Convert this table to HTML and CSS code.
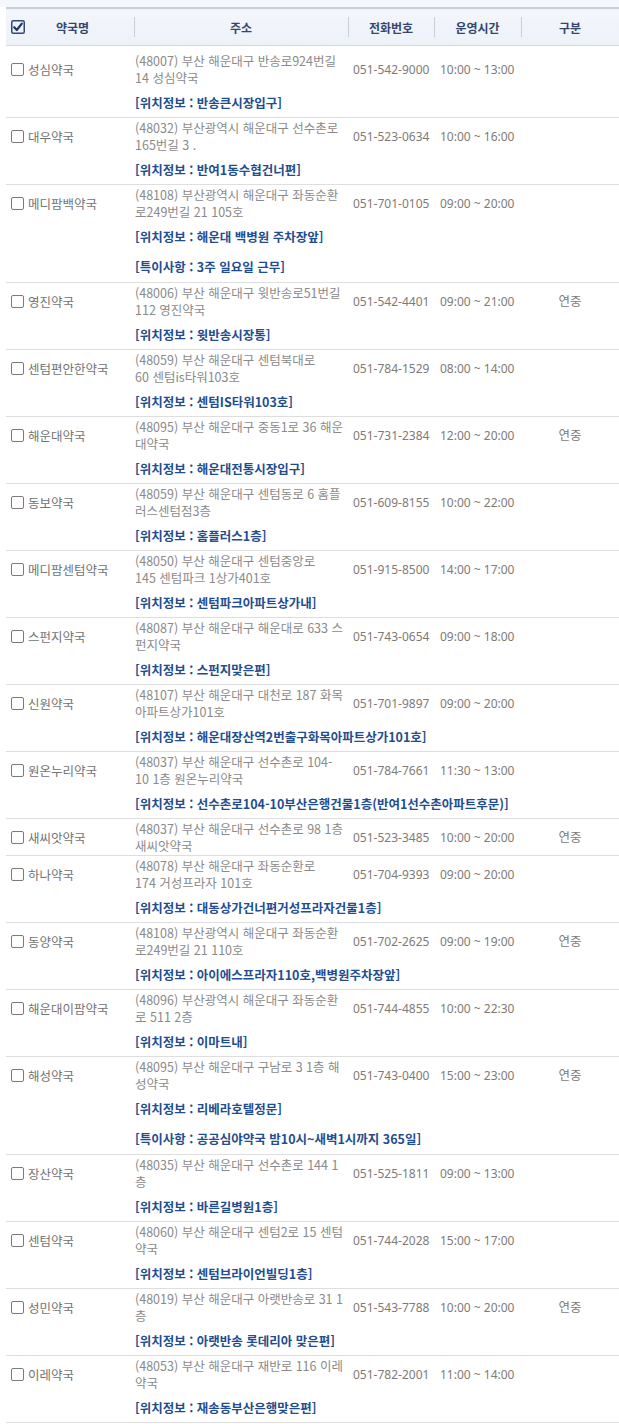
FILE: index.html
```html
<!DOCTYPE html>
<html lang="ko">
<head>
<meta charset="utf-8">
<title>약국 목록</title>
<link rel="stylesheet" href="styles.css">
</head>
<body>
<div class="wrap">
<table class="list">
  <colgroup>
    <col class="c-name"><col class="c-addr"><col class="c-tel"><col class="c-time"><col class="c-type">
  </colgroup>
  <thead>
    <tr>
      <th class="th-name"><div class="th-name-in"><svg class="cb-all" width="14" height="14" viewBox="0 0 14 14"><rect x="0.75" y="0.75" width="12.5" height="12.5" rx="1.5" fill="#eef3fb" stroke="#2d4a7a" stroke-width="1.5"/><path d="M3.2 7.2 L5.8 10 L10.8 3.6" fill="none" stroke="#1f3563" stroke-width="2.2" stroke-linecap="round" stroke-linejoin="round"/></svg><span class="th-label">약국명</span></div></th>
      <th><span class="th-sep">주소</span></th>
      <th><span class="th-sep">전화번호</span></th>
      <th><span class="th-sep">운영시간</span></th>
      <th><span class="th-sep">구분</span></th>
    </tr>
  </thead>
  <tbody>
    <tr class="spacer"><td colspan="5"></td></tr>

    <tr class="main"><td class="name"><div class="name-in"><span class="cb"></span><span>성심약국</span></div></td><td class="addr">(48007) 부산 해운대구 반송로924번길<br>14 성심약국</td><td class="tel">051-542-9000</td><td class="time">10:00 ~ 13:00</td><td class="type"></td></tr>
    <tr class="info last"><td></td><td colspan="4">[위치정보 : 반송큰시장입구]</td></tr>

    <tr class="main"><td class="name"><div class="name-in"><span class="cb"></span><span>대우약국</span></div></td><td class="addr">(48032) 부산광역시 해운대구 선수촌로<br>165번길 3 .</td><td class="tel">051-523-0634</td><td class="time">10:00 ~ 16:00</td><td class="type"></td></tr>
    <tr class="info last"><td></td><td colspan="4">[위치정보 : 반여1동수협건너편]</td></tr>

    <tr class="main"><td class="name"><div class="name-in"><span class="cb"></span><span>메디팜백약국</span></div></td><td class="addr">(48108) 부산광역시 해운대구 좌동순환<br>로249번길 21 105호</td><td class="tel">051-701-0105</td><td class="time">09:00 ~ 20:00</td><td class="type"></td></tr>
    <tr class="info"><td></td><td colspan="4">[위치정보 : 해운대 백병원 주차장앞]</td></tr>
    <tr class="info note last"><td></td><td colspan="4">[특이사항 : 3주 일요일 근무]</td></tr>

    <tr class="main"><td class="name"><div class="name-in"><span class="cb"></span><span>영진약국</span></div></td><td class="addr">(48006) 부산 해운대구 윗반송로51번길<br>112 영진약국</td><td class="tel">051-542-4401</td><td class="time">09:00 ~ 21:00</td><td class="type">연중</td></tr>
    <tr class="info last"><td></td><td colspan="4">[위치정보 : 윗반송시장통]</td></tr>

    <tr class="main"><td class="name"><div class="name-in"><span class="cb"></span><span>센텀편안한약국</span></div></td><td class="addr">(48059) 부산 해운대구 센텀북대로<br>60 센텀is타워103호</td><td class="tel">051-784-1529</td><td class="time">08:00 ~ 14:00</td><td class="type"></td></tr>
    <tr class="info last"><td></td><td colspan="4">[위치정보 : 센텀IS타워103호]</td></tr>

    <tr class="main"><td class="name"><div class="name-in"><span class="cb"></span><span>해운대약국</span></div></td><td class="addr">(48095) 부산 해운대구 중동1로 36 해운<br>대약국</td><td class="tel">051-731-2384</td><td class="time">12:00 ~ 20:00</td><td class="type">연중</td></tr>
    <tr class="info last"><td></td><td colspan="4">[위치정보 : 해운대전통시장입구]</td></tr>

    <tr class="main"><td class="name"><div class="name-in"><span class="cb"></span><span>동보약국</span></div></td><td class="addr">(48059) 부산 해운대구 센텀동로 6 홈플<br>러스센텀점3층</td><td class="tel">051-609-8155</td><td class="time">10:00 ~ 22:00</td><td class="type"></td></tr>
    <tr class="info last"><td></td><td colspan="4">[위치정보 : 홈플러스1층]</td></tr>

    <tr class="main"><td class="name"><div class="name-in"><span class="cb"></span><span>메디팜센텀약국</span></div></td><td class="addr">(48050) 부산 해운대구 센텀중앙로<br>145 센텀파크 1상가401호</td><td class="tel">051-915-8500</td><td class="time">14:00 ~ 17:00</td><td class="type"></td></tr>
    <tr class="info last"><td></td><td colspan="4">[위치정보 : 센텀파크아파트상가내]</td></tr>

    <tr class="main"><td class="name"><div class="name-in"><span class="cb"></span><span>스펀지약국</span></div></td><td class="addr">(48087) 부산 해운대구 해운대로 633 스<br>펀지약국</td><td class="tel">051-743-0654</td><td class="time">09:00 ~ 18:00</td><td class="type"></td></tr>
    <tr class="info last"><td></td><td colspan="4">[위치정보 : 스펀지맞은편]</td></tr>

    <tr class="main"><td class="name"><div class="name-in"><span class="cb"></span><span>신원약국</span></div></td><td class="addr">(48107) 부산 해운대구 대천로 187 화목<br>아파트상가101호</td><td class="tel">051-701-9897</td><td class="time">09:00 ~ 20:00</td><td class="type"></td></tr>
    <tr class="info last"><td></td><td colspan="4">[위치정보 : 해운대장산역2번출구화목아파트상가101호]</td></tr>

    <tr class="main"><td class="name"><div class="name-in"><span class="cb"></span><span>원온누리약국</span></div></td><td class="addr">(48037) 부산 해운대구 선수촌로 104-<br>10 1층 원온누리약국</td><td class="tel">051-784-7661</td><td class="time">11:30 ~ 13:00</td><td class="type"></td></tr>
    <tr class="info last"><td></td><td colspan="4">[위치정보 : 선수촌로104-10부산은행건물1층(반여1선수촌아파트후문)]</td></tr>

    <tr class="main last"><td class="name"><div class="name-in"><span class="cb"></span><span>새씨앗약국</span></div></td><td class="addr">(48037) 부산 해운대구 선수촌로 98 1층<br>새씨앗약국</td><td class="tel">051-523-3485</td><td class="time">10:00 ~ 20:00</td><td class="type">연중</td></tr>

    <tr class="main"><td class="name"><div class="name-in"><span class="cb"></span><span>하나약국</span></div></td><td class="addr">(48078) 부산 해운대구 좌동순환로<br>174 거성프라자 101호</td><td class="tel">051-704-9393</td><td class="time">09:00 ~ 20:00</td><td class="type"></td></tr>
    <tr class="info last"><td></td><td colspan="4">[위치정보 : 대동상가건너편거성프라자건물1층]</td></tr>

    <tr class="main"><td class="name"><div class="name-in"><span class="cb"></span><span>동양약국</span></div></td><td class="addr">(48108) 부산광역시 해운대구 좌동순환<br>로249번길 21 110호</td><td class="tel">051-702-2625</td><td class="time">09:00 ~ 19:00</td><td class="type">연중</td></tr>
    <tr class="info last"><td></td><td colspan="4">[위치정보 : 아이에스프라자110호,백병원주차장앞]</td></tr>

    <tr class="main"><td class="name"><div class="name-in"><span class="cb"></span><span>해운대이팜약국</span></div></td><td class="addr">(48096) 부산광역시 해운대구 좌동순환<br>로 511 2층</td><td class="tel">051-744-4855</td><td class="time">10:00 ~ 22:30</td><td class="type"></td></tr>
    <tr class="info last"><td></td><td colspan="4">[위치정보 : 이마트내]</td></tr>

    <tr class="main"><td class="name"><div class="name-in"><span class="cb"></span><span>해성약국</span></div></td><td class="addr">(48095) 부산 해운대구 구남로 3 1층 해<br>성약국</td><td class="tel">051-743-0400</td><td class="time">15:00 ~ 23:00</td><td class="type">연중</td></tr>
    <tr class="info"><td></td><td colspan="4">[위치정보 : 리베라호텔정문]</td></tr>
    <tr class="info note last"><td></td><td colspan="4">[특이사항 : 공공심야약국 밤10시~새벽1시까지 365일]</td></tr>

    <tr class="main"><td class="name"><div class="name-in"><span class="cb"></span><span>장산약국</span></div></td><td class="addr">(48035) 부산 해운대구 선수촌로 144 1<br>층</td><td class="tel">051-525-1811</td><td class="time">09:00 ~ 13:00</td><td class="type"></td></tr>
    <tr class="info last"><td></td><td colspan="4">[위치정보 : 바른길병원1층]</td></tr>

    <tr class="main"><td class="name"><div class="name-in"><span class="cb"></span><span>센텀약국</span></div></td><td class="addr">(48060) 부산 해운대구 센텀2로 15 센텀<br>약국</td><td class="tel">051-744-2028</td><td class="time">15:00 ~ 17:00</td><td class="type"></td></tr>
    <tr class="info last"><td></td><td colspan="4">[위치정보 : 센텀브라이언빌딩1층]</td></tr>

    <tr class="main"><td class="name"><div class="name-in"><span class="cb"></span><span>성민약국</span></div></td><td class="addr">(48019) 부산 해운대구 아랫반송로 31 1<br>층</td><td class="tel">051-543-7788</td><td class="time">10:00 ~ 20:00</td><td class="type">연중</td></tr>
    <tr class="info last"><td></td><td colspan="4">[위치정보 : 아랫반송 롯데리아 맞은편]</td></tr>

    <tr class="main"><td class="name"><div class="name-in"><span class="cb"></span><span>이레약국</span></div></td><td class="addr">(48053) 부산 해운대구 재반로 116 이레<br>약국</td><td class="tel">051-782-2001</td><td class="time">11:00 ~ 14:00</td><td class="type"></td></tr>
    <tr class="info last"><td></td><td colspan="4">[위치정보 : 재송동부산은행맞은편]</td></tr>
  </tbody>
</table>
</div>
</body>
</html>
```

FILE: styles.css
```css
html, body {
  margin: 0;
  padding: 0;
  background: #fff;
}
body {
  font-family: "Noto Sans CJK KR", "Noto Sans", sans-serif;
  font-size: 12.5px;
  color: #777;
  overflow: hidden;
}
.wrap {
  padding: 7px 0 0 6px;
  background: linear-gradient(#f4f7fb 0, #f4f7fb 7px, #fff 7px);
}
.list {
  width: 613px;
  border-collapse: collapse;
  table-layout: fixed;
}
.c-name { width: 128px; }
.c-addr { width: 214px; }
.c-tel { width: 86px; }
.c-time { width: 87px; }
.c-type { width: 98px; }

.list thead tr {
  border-top: 2px solid #c8d0db;
  border-bottom: 1px solid #d3d9e2;
  background: linear-gradient(#f3f6fb, #edf2f9);
}
.list th {
  height: 36px;
  padding: 0;
  font-weight: bold;
  font-size: 12px;
  color: #34466d;
  text-align: center;
  vertical-align: middle;
}
.th-name-in {
  display: flex;
  align-items: center;
  padding: 0 14px 0 5px;
}
.cb-all { display: block; flex: none; }
.th-label { flex: 1; text-align: center; }
.list th + th {
  background: linear-gradient(#c9ced6, #c9ced6) left center / 1px 20px no-repeat;
}

.spacer td { height: 5px; padding: 0; }

.main td {
  height: 36px;
  padding: 1px 0;
  box-sizing: border-box;
  vertical-align: middle;
  line-height: 17px;
}
.info td {
  height: 30px;
  padding: 0;
  line-height: 17px;
  vertical-align: middle;
  font-weight: bold;
  color: #1f4d8f;
  white-space: nowrap;
  padding-left: 1px;
}
.info.note td { height: 31px; }
tr.last { border-bottom: 1px solid #dedede; }

.name-in {
  display: flex;
  align-items: center;
  padding-left: 5px;
  gap: 4px;
  color: #727272;
}
.cb {
  display: block;
  flex: none;
  width: 13px;
  height: 13px;
  box-sizing: border-box;
  border: 1px solid #7a7a7a;
  border-radius: 2px;
  background: #fff;
}
.main td.addr {
  padding-left: 1px;
  color: #8a8a8a;
  white-space: nowrap;
}
.main td.tel,
.main td.time,
.main td.type {
  font-family: "Noto Sans", "Noto Sans CJK KR", sans-serif;
  font-size: 12px;
  color: #7f7a75;
}
.main td.tel { padding-left: 5px; }
.main td.time { padding-left: 6px; }
.main td.type {
  text-align: center;
  font-size: 12.5px;
}
```
